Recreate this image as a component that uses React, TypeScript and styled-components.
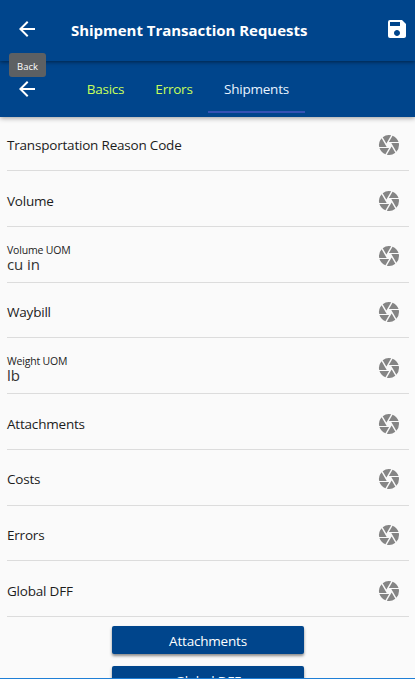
import React from 'react';
import styled, { createGlobalStyle } from 'styled-components';
import { MdArrowBack, MdCamera, MdSave } from 'react-icons/md';

const GlobalStyle = createGlobalStyle`
  * { box-sizing: border-box; }
  body {
    margin: 0;
    background: #fafafa;
    font-family: "Open Sans", "Noto Sans", sans-serif;
    color: #1c1c1c;
  }
`;

const Screen = styled.div`
  position: relative;
  width: 100%;
  height: 679px;
  overflow: hidden;
  border-bottom: 1px solid #1f7fd6;
`;

const Header = styled.header`
  position: relative;
  z-index: 2;
  height: 117px;
  background: #00458c;
  color: #fff;
  box-shadow: 0 1px 5px rgba(0, 0, 0, 0.4);
`;

const TitleBar = styled.div`
  display: flex;
  align-items: center;
  height: 61px;
  padding: 0 6px 3px 15px;
  box-shadow: 0 1px 4px rgba(0, 0, 0, 0.5);
`;

const Title = styled.h1`
  flex: 1;
  margin: 2px 0 0 32px;
  font-size: 15px;
  line-height: 20px;
  font-weight: 700;
  letter-spacing: -0.03px;
  white-space: nowrap;
`;

const IconButton = styled.button`
  display: flex;
  padding: 0;
  border: 0;
  background: none;
  color: inherit;
  font-size: 24px;
`;

const TabBar = styled.nav`
  display: flex;
  align-items: center;
  height: 56px;
  padding-left: 15px;
`;

const Tabs = styled.div`
  display: grid;
  grid-template-columns: 69px 68px 97px;
  align-self: stretch;
  margin-left: 32px;
`;

const Tab = styled.a<{ $active?: boolean }>`
  display: flex;
  align-items: center;
  justify-content: center;
  height: 52px;
  padding-top: 6px;
  border-bottom: 2px solid ${(p) => (p.$active ? '#3552b4' : 'transparent')};
  color: ${(p) => (p.$active ? '#e9f3ff' : '#c8ff5a')};
  font-size: 13.5px;
  letter-spacing: -0.22px;
  white-space: nowrap;
`;

const Tooltip = styled.div`
  position: absolute;
  left: 9px;
  top: 53px;
  width: 37px;
  height: 24px;
  border-radius: 3px;
  background: #5d6063;
  font-size: 9.5px;
  line-height: 27px;
  text-align: center;
`;

const List = styled.main`
  margin: -1.75px 6px 0 7px;
`;

const Row = styled.div`
  display: flex;
  align-items: center;
  justify-content: space-between;
  height: 55.75px;
  padding: 4.5px 8px 0 0;
  border-bottom: 1px solid #dcdcdc;
  svg {
    color: #858585;
    font-size: 24px;
  }
`;

const Name = styled.span`
  font-size: 13.5px;
  line-height: 20px;
  letter-spacing: -0.2px;
`;

const Field = styled.div`
  display: flex;
  flex-direction: column;
  padding-top: 2px;
`;

const Label = styled.span`
  font-size: 10.5px;
  line-height: 14px;
  letter-spacing: -0.18px;
`;

const Value = styled.span`
  font-size: 15px;
  line-height: 15px;
  letter-spacing: -0.1px;
  color: #333;
`;

const Actions = styled.div`
  display: flex;
  flex-direction: column;
  align-items: center;
  gap: 12px;
  padding-top: 9px;
`;

const ActionButton = styled.button`
  width: 192px;
  height: 28px;
  padding: 2px 0 0;
  border: 0;
  border-radius: 2px;
  background: #00458c;
  color: #fff;
  font: 13.5px/20px "Open Sans", "Noto Sans", sans-serif;
  letter-spacing: -0.2px;
  box-shadow: 0 2px 3px rgba(0, 0, 0, 0.45);
`;

const rows: { name: string; value?: string }[] = [
  { name: 'Transportation Reason Code' },
  { name: 'Volume' },
  { name: 'Volume UOM', value: 'cu in' },
  { name: 'Waybill' },
  { name: 'Weight UOM', value: 'lb' },
  { name: 'Attachments' },
  { name: 'Costs' },
  { name: 'Errors' },
  { name: 'Global DFF' },
];

export default function App() {
  return (
    <Screen>
      <GlobalStyle />
      <Header>
        <TitleBar>
          <IconButton aria-label="Back"><MdArrowBack /></IconButton>
          <Title>Shipment Transaction Requests</Title>
          <IconButton aria-label="Save"><MdSave /></IconButton>
        </TitleBar>
        <TabBar>
          <IconButton aria-label="Previous"><MdArrowBack /></IconButton>
          <Tabs>
            <Tab>Basics</Tab>
            <Tab>Errors</Tab>
            <Tab $active>Shipments</Tab>
          </Tabs>
        </TabBar>
        <Tooltip>Back</Tooltip>
      </Header>
      <List>
        {rows.map((row) => (
          <Row key={row.name}>
            {row.value ? (
              <Field>
                <Label>{row.name}</Label>
                <Value>{row.value}</Value>
              </Field>
            ) : (
              <Name>{row.name}</Name>
            )}
            <MdCamera />
          </Row>
        ))}
        <Actions>
          <ActionButton>Attachments</ActionButton>
          <ActionButton>Global DFF</ActionButton>
        </Actions>
      </List>
    </Screen>
  );
}
